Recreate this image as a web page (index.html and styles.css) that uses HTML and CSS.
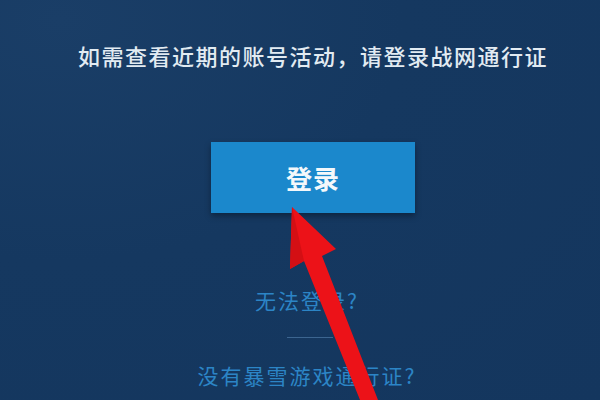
FILE: index.html
```html
<!DOCTYPE html>
<html lang="zh-CN">
<head>
<meta charset="utf-8">
<title>登录</title>
<link rel="stylesheet" href="styles.css">
</head>
<body>
<main class="panel">
  <p class="intro">如需查看近期的账号活动，请登录战网通行证</p>
  <a class="login-btn" href="#">登录</a>
  <a class="link link-first" href="#">无法登录?</a>
  <div class="divider"></div>
  <a class="link link-last" href="#">没有暴雪游戏通行证?</a>
</main>
<svg class="arrow" width="600" height="400" viewBox="0 0 600 400" aria-hidden="true">
  <polygon points="292,207 336,249 322,256 378,400 360,400 304,261 290,269" fill="#ec1218"/>
  <polygon points="292,207 304,261 290,269" fill="#d40f14"/>
</svg>
</body>
</html>
```
FILE: styles.css
```css
html, body {
  margin: 0;
  padding: 0;
  width: 600px;
  height: 400px;
  overflow: hidden;
}
body {
  position: relative;
  background: radial-gradient(ellipse at 10% 5%, #1a3e67 0%, #153860 45%, #14365e 100%);
  font-family: "Noto Sans CJK SC", "Noto Sans", sans-serif;
}
.panel {
  display: flex;
  flex-direction: column;
  align-items: center;
  padding: 40px 0 0 26px;
  box-sizing: border-box;
  height: 400px;
}
.intro {
  margin: 0;
  font-size: 22px;
  line-height: 30px;
  letter-spacing: 1.5px;
  color: #e2ebf2;
  font-weight: 500;
  white-space: nowrap;
}
.login-btn {
  margin-top: 72px;
  width: 204px;
  height: 71px;
  display: flex;
  align-items: center;
  justify-content: center;
  background: #1b88cc;
  color: #f4f8fb;
  font-size: 26px;
  font-weight: 700;
  letter-spacing: 1px;
  text-decoration: none;
  box-shadow: 0 3px 6px rgba(0, 0, 0, 0.35);
}
.link {
  font-size: 21px;
  line-height: 30px;
  letter-spacing: 2px;
  color: #2c85c6;
  text-decoration: none;
  white-space: nowrap;
  margin-right: 12px;
}
.link-first {
  margin-top: 72px;
}
.divider {
  margin-top: 22px;
  margin-right: 6px;
  width: 46px;
  height: 1px;
  background: #3c6590;
}
.link-last {
  margin-top: 22px;
}
.arrow {
  position: absolute;
  left: 0;
  top: 0;
  pointer-events: none;
}
```
